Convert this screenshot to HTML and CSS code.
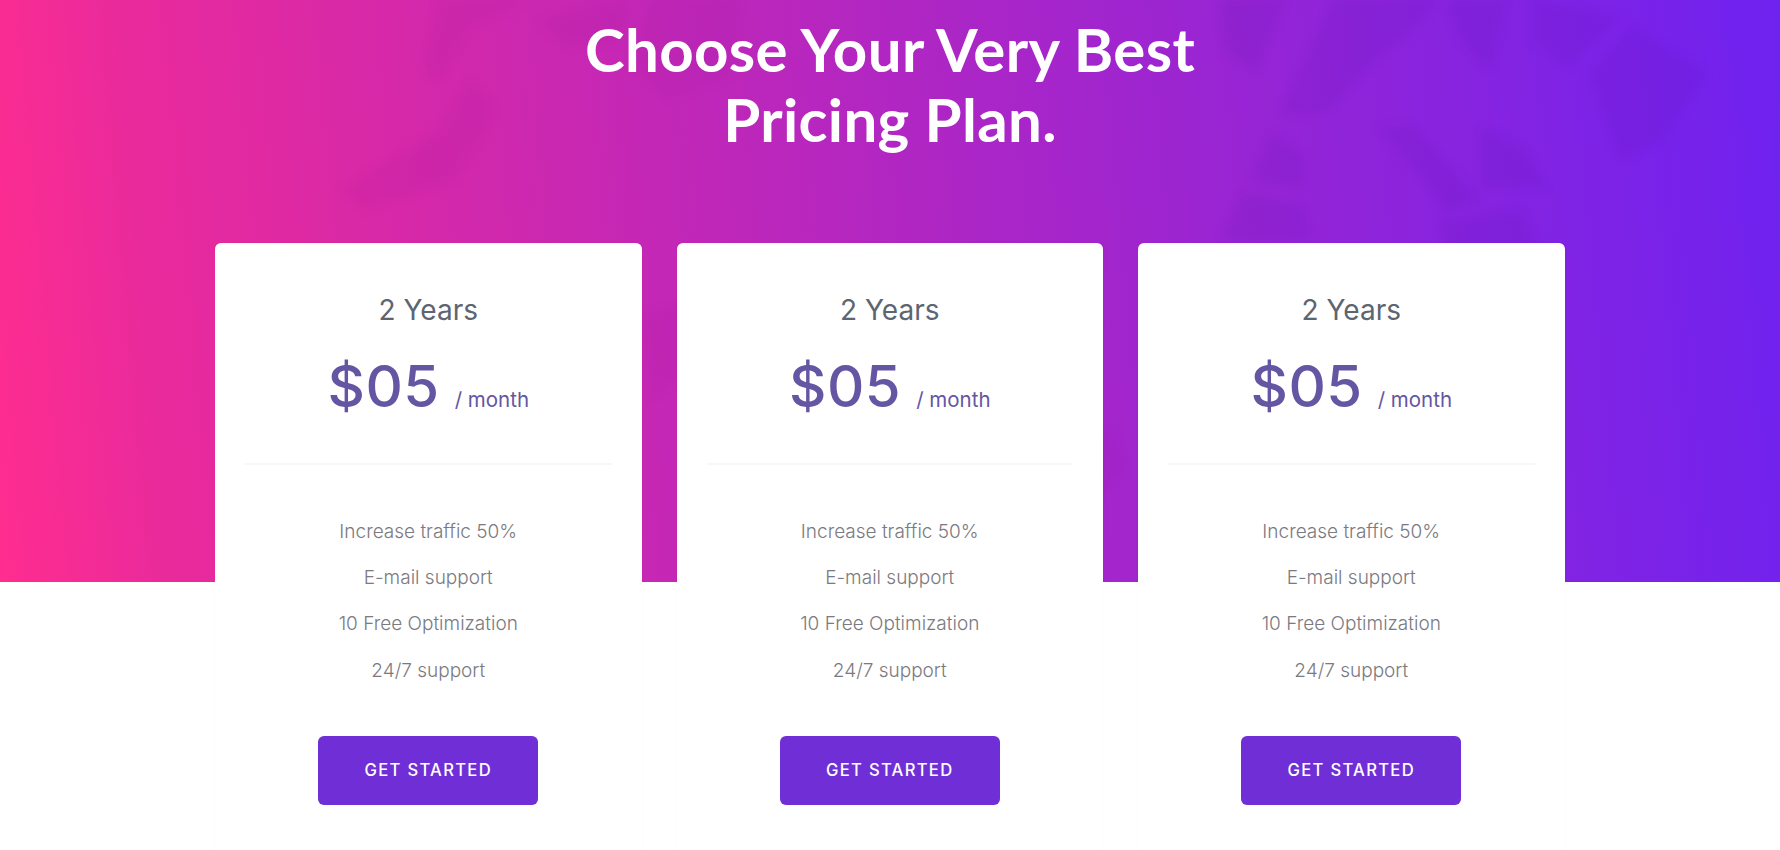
FILE: index.html
```html
<!DOCTYPE html>
<html lang="en">
<head>
<meta charset="utf-8">
<title>Pricing</title>
<link rel="stylesheet" href="styles.css">
</head>
<body>
<section class="pricing">
  <svg class="texture" viewBox="0 0 1780 582" preserveAspectRatio="none" aria-hidden="true">
    <g class="tex-pink">
      <path d="M537 20L630 0l-10 43-53 4z"/>
      <path d="M440 0h90l-60 25-30 55-15-10z"/>
      <path d="M340 190l100-60 30-50 25 30-40 70-90 30z"/>
      <path d="M650 0h90l-10 75-60 25-40-35z"/>
      <path d="M640 315l38-10 4 70-30 25z"/>
      <path d="M1090 440l20-10 15 40-25 20z"/>
    </g>
    <g class="tex-purple">
      <path d="M1334 0h108l-64 57-53 56h-43z"/>
      <path d="M1273 133l31 24v30l-52-7z"/>
      <path d="M1243 193l61 14 8 33-91 0z"/>
      <path d="M1534 0l86 17-52 50-34-27z"/>
      <path d="M1633 27l74 46-43 67-44 20-30-87z"/>
      <path d="M1378 127h34l70 73-35 13-27-40z"/>
      <path d="M1482 127l43 23 22 37h-65z"/>
      <path d="M1220 0l65 0-30 70-30-20z"/>
      <path d="M1445 0h60l-15 70-30-30z"/>
      <path d="M1440 220l80-10 20 40-90 20z"/>
    </g>
  </svg>
  <h1 class="title">Choose Your Very Best<br>Pricing Plan.</h1>
  <div class="plans">
    <article class="plan">
      <h2 class="plan-name">2 Years</h2>
      <p class="plan-price"><span class="amount">$05</span><span class="period">/ month</span></p>
      <ul class="features">
        <li>Increase traffic 50%</li>
        <li>E-mail support</li>
        <li>10 Free Optimization</li>
        <li>24/7 support</li>
      </ul>
      <a class="cta" href="#">GET STARTED</a>
    </article>
    <article class="plan">
      <h2 class="plan-name">2 Years</h2>
      <p class="plan-price"><span class="amount">$05</span><span class="period">/ month</span></p>
      <ul class="features">
        <li>Increase traffic 50%</li>
        <li>E-mail support</li>
        <li>10 Free Optimization</li>
        <li>24/7 support</li>
      </ul>
      <a class="cta" href="#">GET STARTED</a>
    </article>
    <article class="plan">
      <h2 class="plan-name">2 Years</h2>
      <p class="plan-price"><span class="amount">$05</span><span class="period">/ month</span></p>
      <ul class="features">
        <li>Increase traffic 50%</li>
        <li>E-mail support</li>
        <li>10 Free Optimization</li>
        <li>24/7 support</li>
      </ul>
      <a class="cta" href="#">GET STARTED</a>
    </article>
  </div>
</section>
</body>
</html>
```
FILE: styles.css
```css
* { box-sizing: border-box; }
html, body { margin: 0; height: 850px; overflow: hidden; background: #fff; }
body { font-family: "Inter", "Liberation Sans", sans-serif; font-feature-settings: "cv11"; }

.pricing {
  position: relative;
  height: 850px;
  padding-top: 14px;
  background: linear-gradient(85deg, #ff2d8f 0%, #ea2a9b 9%, #6f22f0 100%) no-repeat;
  background-size: 100% 582px;
}
.texture {
  position: absolute;
  left: 0;
  top: 0;
  width: 100%;
  height: 582px;
  filter: blur(5px);
}
.tex-pink path { fill: #a0109a; opacity: .1; }
.tex-purple path { fill: #5a10b0; opacity: .13; }

.title {
  position: relative;
  margin: 0;
  text-align: center;
  color: #fff;
  font: 700 60px/70px "Lato", "Open Sans", sans-serif;
  letter-spacing: .35px;
}
.plans {
  position: relative;
  display: flex;
  gap: 35px;
  margin: 89px 0 0 215px;
}
.plan {
  width: 426.5px;
  height: 607px;
  padding: 49px 30px 0;
  background: #fff;
  border-radius: 6px 6px 0 0;
  box-shadow: 0 0 4px rgba(0, 0, 0, .02);
  text-align: center;
  display: flex;
  flex-direction: column;
  align-items: center;
}
.plan-name {
  margin: 0;
  color: #5d6571;
  font: 400 28px/36px "Inter", sans-serif;
}
.plan-price {
  margin: 17px 0 0;
  width: 100%;
  height: 120px;
  border-bottom: 2px solid #f7f7f8;
  color: #6556a3;
  display: flex;
  justify-content: center;
  align-items: baseline;
  gap: 15px;
  padding-top: 5px;
}
.amount {
  font: 500 58px/72px "Inter", sans-serif;
  letter-spacing: .5px;
}
.period {
  font: 400 20.5px/24px "Inter", sans-serif;
}
.features {
  list-style: none;
  margin: 44px 0 0;
  padding: 0;
  color: #7a7a80;
  font: 300 19px/46.2px "Inter", sans-serif;
}
.cta {
  display: flex;
  align-items: center;
  justify-content: center;
  width: 220px;
  height: 69px;
  margin-top: 42px;
  border-radius: 6px;
  background: #702fd6;
  color: #fff;
  text-decoration: none;
  letter-spacing: 1.3px;
  font: 500 16.6px/1 "Inter", sans-serif;
}
```
